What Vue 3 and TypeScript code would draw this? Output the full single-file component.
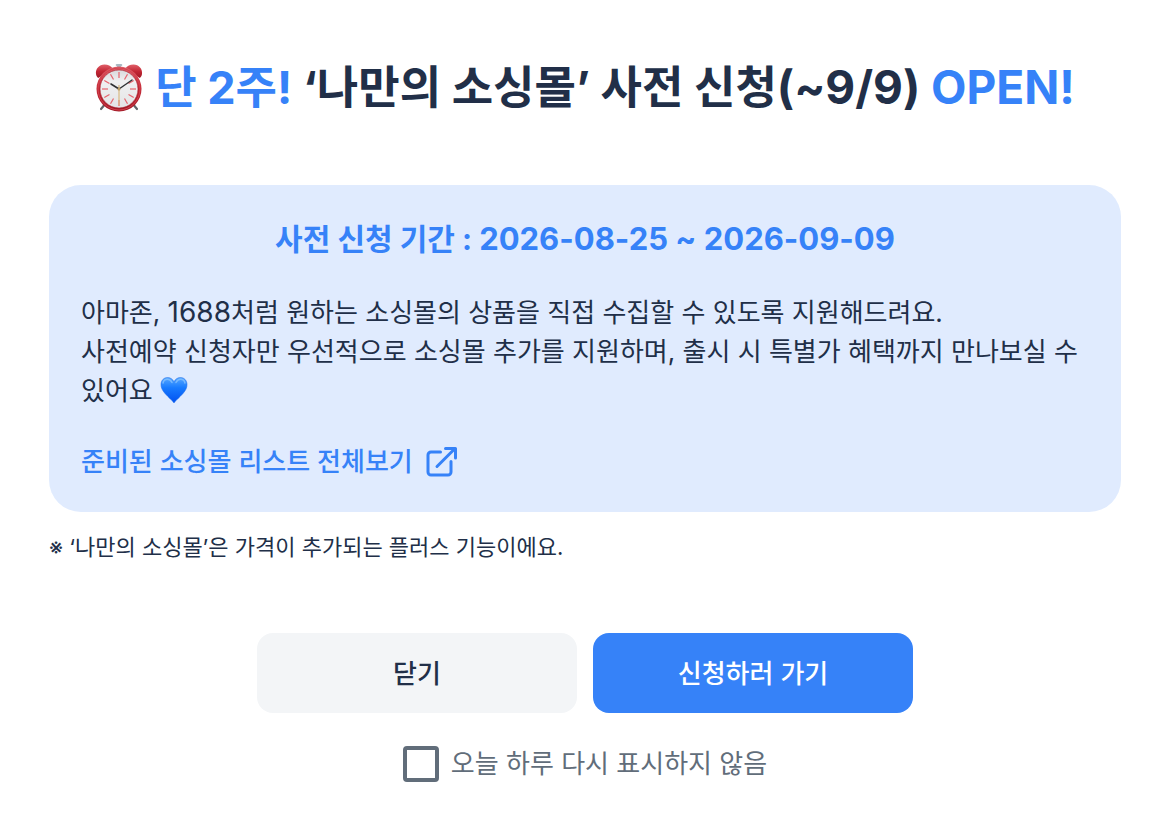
<script setup lang="ts">
import { ref } from 'vue'

const open = ref(true)
const hideToday = ref(false)
const start = '2026-08-25'
const end = '2026-09-09'
const ticks = Array.from({ length: 12 }, (_, i) => i * 30)

function close(): void {
  open.value = false
}
</script>

<template>
  <main v-if="open" class="popup" aria-labelledby="popup-title">
    <h1 id="popup-title" class="title">
      <svg class="clock" viewBox="0 0 48 48" aria-hidden="true">
        <defs>
          <linearGradient id="bell" x1="0" y1="0" x2="0" y2="1">
            <stop offset="0" stop-color="#e0606a" />
            <stop offset="0.5" stop-color="#c32735" />
            <stop offset="1" stop-color="#a01825" />
          </linearGradient>
          <linearGradient id="face" x1="0" y1="0" x2="0" y2="1">
            <stop offset="0" stop-color="#d9d9dc" />
            <stop offset="0.3" stop-color="#f0f0f1" />
            <stop offset="1" stop-color="#e4e4e6" />
          </linearGradient>
        </defs>
        <path d="M11 39L6 45M37 39l5 6" stroke="#60656a" stroke-width="2.2" stroke-linecap="round" />
        <path d="M21.500 0h5l1 1-1.500 1.500V5h-4V2.500L20.500 1z" fill="#a9b8c2" />
        <path d="M1 10C.3 5 4 .5 9.500.5c3.500 0 6.500 1.500 8 3.800L3.300 14C2 13.200 1.200 11.700 1 10z" fill="url(#bell)" />
        <path d="M47 10c.7-5-3-9.500-8.500-9.500-3.500 0-6.500 1.500-8 3.800L44.700 14c1.300-.8 2.100-2.300 2.300-4z" fill="url(#bell)" />
        <circle cx="24" cy="25" r="22.500" fill="url(#bell)" />
        <circle cx="24" cy="25" r="21" fill="none" stroke="#d2434f" stroke-width="1" />
        <circle cx="24" cy="25" r="19" fill="url(#face)" stroke="#a51b28" stroke-width="0.6" />
        <path
          v-for="angle in ticks"
          :key="angle"
          d="M24 8v6"
          :transform="`rotate(${angle} 24 25)`"
          stroke="#e6636c"
          stroke-width="1.2"
        />
        <path d="M24 21v20" stroke="#d9ba82" stroke-width="1.200" />
        <path d="M24 25L16 20" stroke="#2f3134" stroke-width="1.600" stroke-linecap="round" />
        <path d="M24 25L37 16" stroke="#2f3134" stroke-width="1.400" stroke-linecap="round" />
        <circle cx="24" cy="25" r="1.500" fill="#b99c65" />
      </svg>
      <span><span class="accent">단 2주!</span> ‘나만의 소싱몰’ 사전 신청<span class="latin">(~9/9)</span> <span class="latin accent">OPEN!</span></span>
    </h1>

    <section class="card">
      <h2 class="period">사전 신청 기간 : <span class="dates">{{ start }} ~ {{ end }}</span></h2>
      <p class="desc">
        아마존, <span class="number">1688</span>처럼 원하는 소싱몰의 상품을 직접 수집할 수 있도록 지원해드려요.<br />
        사전예약 신청자만 우선적으로 소싱몰 추가를 지원하며, 출시 시 특별가 혜택까지 만나보실 수 있어요
        <svg class="heart" viewBox="0 0 28 28" aria-hidden="true">
          <defs>
            <linearGradient id="heart-fill" x1="0" y1="0" x2="0" y2="1">
              <stop offset="0" stop-color="#56a8ff" />
              <stop offset="0.4" stop-color="#187bff" />
              <stop offset="1" stop-color="#0050f0" />
            </linearGradient>
          </defs>
          <path d="M14 27C12.500 24.500 8 21 5 17.500 2 14 1 11.500 1 8.500 1 4.500 3.800 1.500 7.500 1.500c3 0 5.300 1.700 6.500 4.300 1.200-2.600 3.500-4.300 6.500-4.300 3.700 0 6.500 3 6.500 7 0 3-1 5.500-4 9C20 21 15.500 24.500 14 27z" fill="url(#heart-fill)" stroke="#1767e8" stroke-width="0.500" />
          <path d="M3 7c.5-2.400 2.300-3.700 4.500-3.700S11 4.500 12 6.500M16 6.500c1-2 2.300-3.200 4.500-3.200S24.500 4.600 25 7" fill="none" stroke="#8fc7ff" stroke-width="1.500" stroke-linecap="round" opacity="0.7" />
        </svg>
      </p>
      <a class="link" href="#">
        준비된 소싱몰 리스트 전체보기
        <svg class="external" viewBox="0 0 32 32" aria-hidden="true">
          <path d="M15.500 6H6a3 3 0 0 0-3 3v17a3 3 0 0 0 3 3h17a3 3 0 0 0 3-3V15.500M12 20.500L29.500 3M20.500 2.500H30.500V12" fill="none" stroke="currentColor" stroke-width="3" stroke-linecap="round" stroke-linejoin="round" />
        </svg>
      </a>
    </section>

    <p class="note">※ ‘나만의 소싱몰’은 가격이 추가되는 플러스 기능이에요.</p>

    <div class="actions">
      <button class="button" type="button" @click="close">닫기</button>
      <button class="button primary" type="button">신청하러 가기</button>
    </div>

    <label class="today">
      <input v-model="hideToday" class="check" type="checkbox" />
      오늘 하루 다시 표시하지 않음
    </label>
  </main>
</template>

<style>
body {
  margin: 0;
  background: #fff;
}
</style>

<style scoped>
.popup {
  box-sizing: border-box;
  padding: 55px 51px 40px 49px;
  color: #212f48;
  font-family: Inter, 'Noto Sans CJK KR', sans-serif;
  word-break: keep-all;
}

.title {
  display: flex;
  align-items: center;
  justify-content: center;
  gap: 12px;
  margin: 0 0 65px;
  font-size: 45px;
  font-weight: 700;
  line-height: 64px;
}

.latin {
  font-size: 46px;
}

.clock {
  flex: none;
  width: 48px;
  height: 48px;
}

.accent,
.period,
.link {
  color: #3682f8;
}

.card {
  padding: 32px 32px 30px;
  border-radius: 32px;
  background: #e0ebfe;
}

.period {
  margin: 0 0 32px;
  font-size: 30px;
  font-weight: 700;
  line-height: 44px;
  text-align: center;
}

.dates {
  font-size: 31px;
}

.desc {
  margin: 0;
  font-size: 26px;
  line-height: 39px;
}

.number {
  font-size: 28px;
}

.heart {
  width: 28px;
  height: 28px;
  vertical-align: -4px;
}

.link {
  display: flex;
  align-items: center;
  gap: 12px;
  width: fit-content;
  margin-top: 32px;
  font-size: 26px;
  font-weight: 500;
  line-height: 40px;
  text-decoration: none;
}

.external {
  width: 32px;
  height: 32px;
}

.note {
  margin: 18px 0 69px;
  font-size: 22px;
  line-height: 34px;
}

.actions {
  display: flex;
  justify-content: center;
  gap: 16px;
}

.button {
  width: 320px;
  height: 80px;
  padding: 0 0 4px;
  border: 0;
  border-radius: 16px;
  background: #f3f5f7;
  color: inherit;
  font: inherit;
  font-size: 26px;
  font-weight: 500;
  cursor: pointer;
}

.primary {
  background: #3682f8;
  color: #fff;
}

.today {
  display: flex;
  align-items: center;
  justify-content: center;
  gap: 12px;
  margin-top: 31px;
  color: #616d7a;
  font-size: 26px;
  line-height: 40px;
}

.check {
  box-sizing: border-box;
  width: 36px;
  height: 36px;
  margin: 0;
  border: 4px solid #616d7a;
  border-radius: 4px;
  appearance: none;
  background: #fff;
}

.check:checked {
  background: #616d7a;
}
</style>
